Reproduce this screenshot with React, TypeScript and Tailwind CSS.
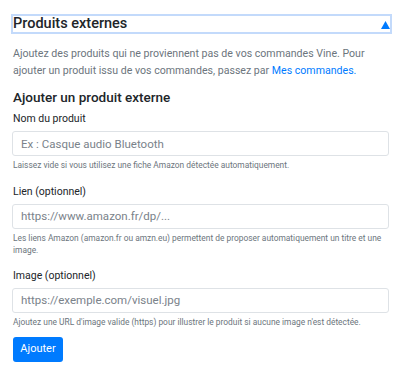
export default function App() {
  const font = { fontFamily: 'Roboto, "Open Sans", sans-serif' };
  const inputCls =
    "block w-full h-[25px] border border-[#dee2e6] rounded-[3px] px-[8px] text-[11.5px] text-[#495057] placeholder:text-[#7a828a] outline-none bg-white";
  return (
    <div className="w-[400px] h-[378px] bg-white text-[#212529] overflow-hidden" style={font}>
      <div className="pt-[14px] pl-[11px] pr-[8px]">
        <div className="h-[20px] border-2 border-[#c3dafb] flex items-center justify-between">
          <span className="text-[14.5px] leading-none font-medium text-[#212529]">Produits externes</span>
          <svg width="9" height="8" viewBox="0 0 9 8" className="mt-[1px]">
            <polygon points="4.5,0 9,8 0,8" fill="#007bff" />
          </svg>
        </div>
      </div>
      <div className="pl-[12px] pr-[11px]">
        <p className="mt-[11px] text-[10.6px] leading-[17px] text-[#6c757d] pl-[1px]">
          Ajoutez des produits qui ne proviennent pas de vos commandes Vine. Pour ajouter un produit issu de vos commandes, passez par{" "}
          <a className="text-[#007bff]">Mes commandes.</a>
        </p>
        <h3 className="mt-[9px] text-[13.5px] leading-[18px] font-medium pl-[1px]">Ajouter un produit externe</h3>

        <label className="mt-[5px] block text-[10.5px] leading-[16px] pl-[1px]">Nom du produit</label>
        <input className={"mt-[4px] " + inputCls} placeholder="Ex : Casque audio Bluetooth" />
        <div className="mt-[3px] text-[8.4px] leading-[12.5px] text-[#6c757d] pl-[1px]">
          Laissez vide si vous utilisez une fiche Amazon détectée automatiquement.
        </div>

        <label className="mt-[12px] block text-[10.5px] leading-[16px] pl-[1px]">Lien (optionnel)</label>
        <input className={"mt-[4px] " + inputCls} placeholder="https://www.amazon.fr/dp/..." />
        <div className="mt-[3px] text-[8.4px] leading-[12.5px] text-[#6c757d] pl-[1px]">
          Les liens Amazon (amazon.fr ou amzn.eu) permettent de proposer automatiquement un titre et une image.
        </div>

        <label className="mt-[11px] block text-[10.5px] leading-[16px] pl-[1px]">Image (optionnel)</label>
        <input className={"mt-[4px] " + inputCls} placeholder="https://exemple.com/visuel.jpg" />
        <div className="mt-[3px] text-[8.4px] leading-[12.5px] text-[#6c757d] pl-[1px]">
          Ajoutez une URL d'image valide (https) pour illustrer le produit si aucune image n'est détectée.
        </div>

        <button className="mt-[9px] h-[25px] w-[50px] bg-[#007bff] text-white text-[11px] rounded-[3px] ml-[1px] block">
          Ajouter
        </button>
      </div>
    </div>
  );
}
